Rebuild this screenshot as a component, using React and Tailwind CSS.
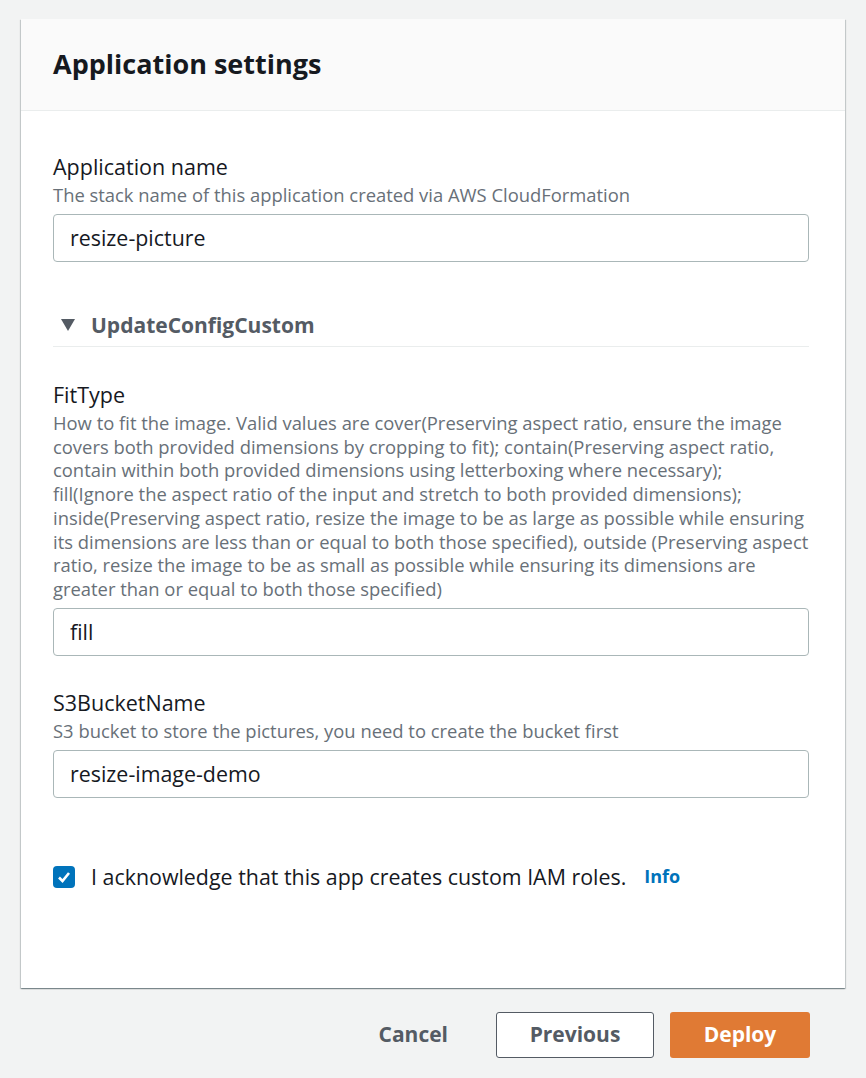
import React, { useState } from 'react';

const font = { fontFamily: '"Open Sans", "Noto Sans", Arial, sans-serif' };

const fitTypeLines = [
    'How to fit the image. Valid values are cover(Preserving aspect ratio, ensure the image',
    'covers both provided dimensions by cropping to fit); contain(Preserving aspect ratio,',
    'contain within both provided dimensions using letterboxing where necessary);',
    'fill(Ignore the aspect ratio of the input and stretch to both provided dimensions);',
    'inside(Preserving aspect ratio, resize the image to be as large as possible while ensuring',
    'its dimensions are less than or equal to both those specified), outside (Preserving aspect',
    'ratio, resize the image to be as small as possible while ensuring its dimensions are',
    'greater than or equal to both those specified)',
];

const Field = ({ label, description, value }) => (
    <div className="flex flex-col">
        <label className="mb-[3px] text-[21.5px] leading-[26px] text-[#16191f]">{label}</label>
        <p className="text-[18.4px] leading-[23.75px] text-[#687078]">{description}</p>
        <input
            readOnly
            value={value}
            className="mt-[7px] h-[48px] w-full rounded-[4px] border border-[#aab7b8] bg-white px-[16px] text-[21.4px] text-[#16191f] outline-none"
        />
    </div>
);

export default function App() {
    const [checked, setChecked] = useState(true);
    const [open, setOpen] = useState(true);

    return (
        <div className="min-h-[1078px] bg-[#f2f3f3] px-[21px] pt-[19px]" style={font}>
            <div className="bg-white shadow-[0_1px_1px_0_rgba(0,28,36,0.3),1px_1px_1px_0_rgba(0,28,36,0.15),-1px_1px_1px_0_rgba(0,28,36,0.15)]">
                <div className="flex h-[92px] items-center border-b border-[#eaeded] bg-[#fafafa] px-[32px]">
                    <h2 className="text-[27px] font-bold text-[#16191f]">Application settings</h2>
                </div>

                <div className="flex flex-col pl-[32px] pr-[36px] pt-[43px] pb-[95px]">
                    <Field
                        label="Application name"
                        description="The stack name of this application created via AWS CloudFormation"
                        value="resize-picture"
                    />

                    <button
                        onClick={() => setOpen(!open)}
                        className="mt-[49px] flex items-center gap-[16px] border-b border-[#eaeded] pb-[7px] pl-[8px] text-left"
                    >
                        <svg width="14" height="12" viewBox="0 0 14 12" className={open ? '' : '-rotate-90'}>
                            <path d="M0 0h14L7 12z" fill="#545b64" />
                        </svg>
                        <span className="text-[21px] leading-[28px] font-bold text-[#545b64]">UpdateConfigCustom</span>
                    </button>

                    {open && (
                        <div className="flex flex-col gap-[34px] pt-[35px]">
                            <Field
                                label="FitType"
                                description={fitTypeLines.map((line) => (
                                    <span key={line} className="block whitespace-nowrap">{line}</span>
                                ))}
                                value="fill"
                            />
                            <Field
                                label="S3BucketName"
                                description="S3 bucket to store the pictures, you need to create the bucket first"
                                value="resize-image-demo"
                            />
                        </div>
                    )}

                    <label className="mt-[63px] flex items-center">
                        <span
                            onClick={() => setChecked(!checked)}
                            className={`flex h-[22px] w-[22px] items-center justify-center rounded-[4px] ${checked ? 'bg-[#0073bb]' : 'border-2 border-[#aab7b8] bg-white'}`}
                        >
                            {checked && (
                                <svg width="16" height="16" viewBox="0 0 16 16">
                                    <path d="M3 8.5l3.5 3.5L13 4" fill="none" stroke="white" strokeWidth="2.6" />
                                </svg>
                            )}
                        </span>
                        <span className="ml-[16px] text-[21.4px] text-[#16191f]">I acknowledge that this app creates custom IAM roles.</span>
                        <a className="ml-[18px] text-[18px] font-bold text-[#0073bb]">Info</a>
                    </label>
                </div>
            </div>

            <div className="mt-[24px] flex items-center justify-end gap-[16px] pr-[35px]">
                <button className="px-[32px] text-[21px] font-bold text-[#545b64]">Cancel</button>
                <button className="h-[46px] w-[158px] rounded-[3px] border border-[#545b64] bg-white text-[21px] font-bold text-[#545b64]">Previous</button>
                <button className="h-[46px] w-[140px] rounded-[3px] bg-[#e07a34] text-[21px] font-bold text-white">Deploy</button>
            </div>
        </div>
    );
}
